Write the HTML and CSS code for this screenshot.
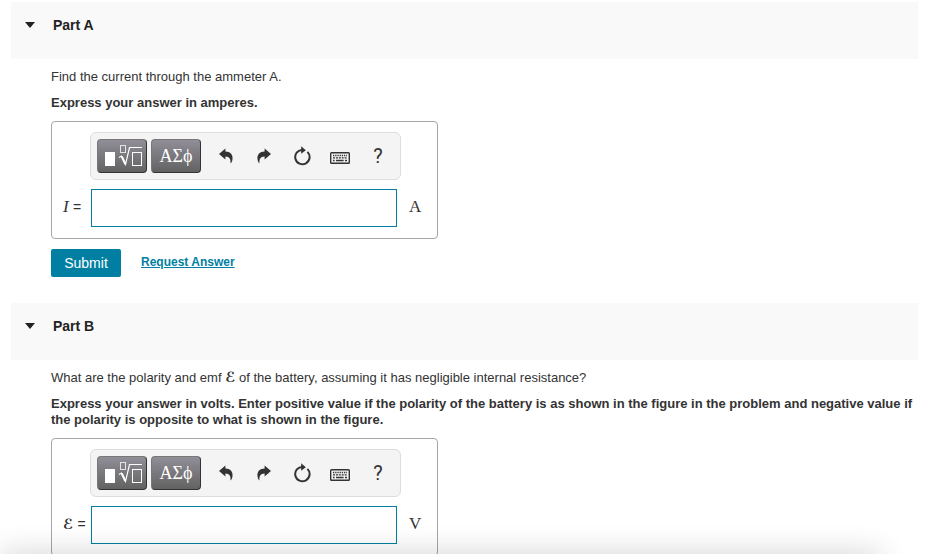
FILE: index.html
```html
<!DOCTYPE html>
<html lang="en">
<head>
    <meta charset="utf-8">
    <title>Parts A and B</title>
    <link rel="stylesheet" href="styles.css">
</head>
<body>
    <!-- shared toolbar icons -->
    <svg class="icon-defs" aria-hidden="true">
        <symbol id="icon-template" viewBox="0 0 40 26">
            <rect x="3" y="9" width="10" height="14" fill="#fff"/>
            <rect x="18.5" y="2.5" width="5" height="7" fill="none" stroke="#e4e4e4"/>
            <path d="M17 14.5 L19.5 13 L23.5 21.5 L27.5 4.5 H40" fill="none" stroke="#fff" stroke-width="1.2"/>
            <path d="M19.8 13.5 L23.3 21" stroke="#fff" stroke-width="2"/>
            <rect x="30.5" y="9.5" width="9" height="13" fill="none" stroke="#fff"/>
        </symbol>
        <symbol id="icon-undo" viewBox="0 0 16 16">
            <path d="M1 6 L7.4 0.6 V3.6 C12.2 3.8 15 6.5 14.5 11.2 C14.3 12.9 13.6 14.4 12.5 15.6 C12.9 11.2 11.8 8.7 7.4 8.5 V11.4 Z"/>
        </symbol>
        <symbol id="icon-redo" viewBox="0 0 16 16">
            <path d="M15 6 L8.6 0.6 V3.6 C3.8 3.8 1 6.5 1.5 11.2 C1.7 12.9 2.4 14.4 3.5 15.6 C3.1 11.2 4.2 8.7 8.6 8.5 V11.4 Z"/>
        </symbol>
        <symbol id="icon-reset" viewBox="0 0 18 20">
            <path d="M14.4 5.9 A7.2 7.2 0 1 1 9.8 3.9" fill="none" stroke="currentColor" stroke-width="2"/>
            <path d="M8.2 0.2 L12.8 4.2 L8.2 7.8 Z"/>
        </symbol>
        <symbol id="icon-keyboard" viewBox="0 0 20 12">
            <rect x="0.7" y="0.7" width="18.6" height="10.6" rx="0.8" fill="none" stroke="currentColor" stroke-width="1.4"/>
            <path d="M3 3.5 H17" stroke="currentColor" stroke-width="1.3" stroke-dasharray="1.3 0.9"/>
            <path d="M3 5.8 H17" stroke="currentColor" stroke-width="1.3" stroke-dasharray="2 0.9"/>
            <path d="M3 8.5 H4.6 M6 8.5 H13.6 M15 8.5 H17" stroke="currentColor" stroke-width="1.3"/>
        </symbol>
    </svg>

    <main class="page">
        <section class="part">
            <button type="button" class="part-header"><span class="arrow"></span>Part A</button>
            <div class="part-body">
                <p>Find the current through the ammeter A.</p>
                <p class="instructions">Express your answer in amperes.</p>
                <div class="answer-box">
                    <div class="toolbar">
                        <button type="button" class="btn-math" aria-label="Templates"><svg width="40" height="26"><use href="#icon-template"/></svg></button>
                        <button type="button" class="btn-math">ΑΣϕ</button>
                        <div class="tools">
                            <button type="button" aria-label="Undo"><svg width="16" height="16"><use href="#icon-undo"/></svg></button>
                            <button type="button" aria-label="Redo"><svg width="16" height="16"><use href="#icon-redo"/></svg></button>
                            <button type="button" aria-label="Reset"><svg width="18" height="20"><use href="#icon-reset"/></svg></button>
                            <button type="button" class="keyboard" aria-label="Keyboard"><svg width="20" height="12"><use href="#icon-keyboard"/></svg></button>
                            <button type="button">?</button>
                        </div>
                    </div>
                    <label for="current"><i>I</i> <span class="equals">=</span></label>
                    <input type="text" id="current">
                    <span class="unit">A</span>
                </div>
                <div class="actions">
                    <button type="button" class="btn-submit">Submit</button>
                    <a href="#">Request Answer</a>
                </div>
            </div>
        </section>

        <section class="part">
            <button type="button" class="part-header"><span class="arrow"></span>Part B</button>
            <div class="part-body">
                <p>What are the polarity and emf <span class="script">ℰ</span> of the battery, assuming it has negligible internal resistance?</p>
                <p class="instructions">Express your answer in volts. Enter positive value if the polarity of the battery is as shown in the figure in the problem and negative value if the polarity is opposite to what is shown in the figure.</p>
                <div class="answer-box">
                    <div class="toolbar">
                        <button type="button" class="btn-math" aria-label="Templates"><svg width="40" height="26"><use href="#icon-template"/></svg></button>
                        <button type="button" class="btn-math">ΑΣϕ</button>
                        <div class="tools">
                            <button type="button" aria-label="Undo"><svg width="16" height="16"><use href="#icon-undo"/></svg></button>
                            <button type="button" aria-label="Redo"><svg width="16" height="16"><use href="#icon-redo"/></svg></button>
                            <button type="button" aria-label="Reset"><svg width="18" height="20"><use href="#icon-reset"/></svg></button>
                            <button type="button" class="keyboard" aria-label="Keyboard"><svg width="20" height="12"><use href="#icon-keyboard"/></svg></button>
                            <button type="button">?</button>
                        </div>
                    </div>
                    <label for="emf"><span class="script">ℰ</span> <span class="equals">=</span></label>
                    <input type="text" id="emf">
                    <span class="unit">V</span>
                </div>
            </div>
        </section>
    </main>
    <div class="bottom-shadow"></div>
</body>
</html>
```
FILE: styles.css
```css
* { margin: 0; padding: 0; box-sizing: border-box; }
body { font-family: "Liberation Sans", Arial, sans-serif; font-size: 13px; line-height: 16px; color: #333; background: #fff; }
button { font-family: inherit; color: inherit; border: none; background: none; cursor: pointer; }
.icon-defs { display: none; }

.page { height: 100vh; overflow: hidden; padding: 2px 23px 0 11px; }
.part { margin-bottom: 26px; }
.part-header { display: flex; align-items: center; width: 100%; height: 57px; padding: 0 14px 12px; background: #f9f9f9; font-size: 14px; font-weight: bold; color: #222; text-align: left; }
.arrow { margin-right: 18px; border: 5px solid transparent; border-top: 6px solid #222; border-bottom: 0; }
.part-body { padding: 10px 0 0 40px; }
.part-body p { margin-bottom: 10px; }
.part-body .instructions { font-weight: bold; }

.answer-box { display: inline-grid; grid-template-columns: 39px 306px 40px; align-items: center; row-gap: 9px; padding: 10px 0 11px; border: 1px solid #a6a6a6; border-radius: 4px; vertical-align: top; }
.answer-box label { padding: 0 0 2px 11px; font-family: "Liberation Serif", serif; font-size: 17px; white-space: nowrap; }
.answer-box .equals { font-family: "Liberation Sans", Arial, sans-serif; font-size: 14px; }
.answer-box input { width: 100%; height: 38px; padding: 0 8px; border: 1px solid #007fa3; background: transparent; font-size: 16px; outline: none; }
.unit { padding: 0 0 2px 12px; font-family: "Liberation Serif", serif; font-size: 17px; }
.script { font-family: "DejaVu Sans", sans-serif; font-size: 14px; font-style: italic; font-weight: bold; line-height: 0; }

.toolbar { grid-column: 1 / -1; justify-self: start; display: flex; align-items: center; gap: 4px; height: 48px; margin-left: 38px; padding: 0 3px 0 6px; border: 1px solid #ddd; border-radius: 6px; background: #f4f4f4; }
.btn-math { display: flex; align-items: center; justify-content: center; width: 50px; height: 34px; border: 1px solid #333; border-top-color: #777; border-left-color: #777; border-radius: 4px; background: linear-gradient(#918e98, #626262); font-family: "Liberation Serif", serif; font-size: 18px; color: #fff; }
.tools { display: flex; padding-left: 2px; }
.tools button { display: flex; align-items: center; justify-content: center; width: 38px; height: 34px; font-family: Roboto, sans-serif; font-size: 20px; }
.tools .keyboard { padding-top: 4px; }
.tools svg { fill: currentColor; }

.actions { display: flex; align-items: center; gap: 20px; margin-top: 10px; }
.btn-submit { width: 70px; height: 28px; border-radius: 2px; background: #007fa3; color: #fff; font-size: 14px; }
.actions a { padding-bottom: 2px; color: #007fa3; font-size: 12px; font-weight: bold; }

.bottom-shadow { position: fixed; left: 0; right: 60px; bottom: -20px; height: 20px; box-shadow: 0 0 30px rgba(0, 0, 0, 0.2); pointer-events: none; }
```
